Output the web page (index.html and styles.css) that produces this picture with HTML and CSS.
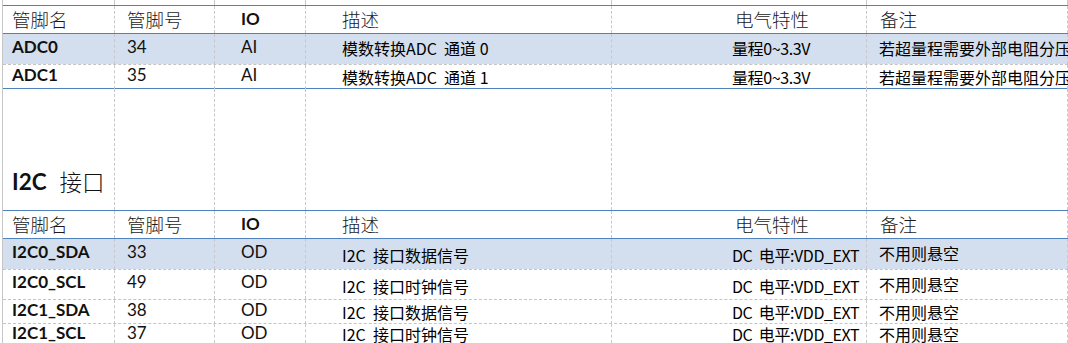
FILE: index.html
```html
<!DOCTYPE html>
<html lang="zh">
<head>
<meta charset="utf-8">
<title>管脚定义</title>
<link rel="stylesheet" href="styles.css">
</head>
<body>
<div class="sheet">
  <div class="row top blue-b">
    <div class="c c1"></div><div class="c c2"></div><div class="c c3"></div><div class="c c4"></div><div class="c c5"></div><div class="c c6"></div>
  </div>
  <div class="row head blue-b">
    <div class="c c1 hcn">管脚名</div>
    <div class="c c2 hcn">管脚号</div>
    <div class="c c3 hen">IO</div>
    <div class="c c4 hcn">描述</div>
    <div class="c c5 hcn">电气特性</div>
    <div class="c c6 hcn">备注</div>
  </div>
  <div class="row h31 hl dash-b">
    <div class="c c1 en b">ADC0</div>
    <div class="c c2 en">34</div>
    <div class="c c3 en">AI</div>
    <div class="c c4 cn">模数转换ADC  通道 0</div>
    <div class="c c5 cn">量程0~3.3V</div>
    <div class="c c6 cn">若超量程需要外部电阻分压</div>
  </div>
  <div class="row h24 blue-b">
    <div class="c c1 en b">ADC1</div>
    <div class="c c2 en">35</div>
    <div class="c c3 en">AI</div>
    <div class="c c4 cn">模数转换ADC  通道 1</div>
    <div class="c c5 cn">量程0~3.3V</div>
    <div class="c c6 cn">若超量程需要外部电阻分压</div>
  </div>
  <div class="row gap blue-b">
    <div class="c c1 title"><span class="t-en">I2C</span><span class="t-cn">接口</span></div>
    <div class="c c2"></div><div class="c c3"></div><div class="c c4"></div><div class="c c5"></div><div class="c c6"></div>
  </div>
  <div class="row head blue-b">
    <div class="c c1 hcn">管脚名</div>
    <div class="c c2 hcn">管脚号</div>
    <div class="c c3 hen">IO</div>
    <div class="c c4 hcn">描述</div>
    <div class="c c5 hcn">电气特性</div>
    <div class="c c6 hcn">备注</div>
  </div>
  <div class="row h31 hl dash-b">
    <div class="c c1 en b">I2C0_SDA</div>
    <div class="c c2 en">33</div>
    <div class="c c3 en">OD</div>
    <div class="c c4 cn low">I2C  接口数据信号</div>
    <div class="c c5 cn low">DC  电平:VDD_EXT</div>
    <div class="c c6 cn">不用则悬空</div>
  </div>
  <div class="row h30 dash-b">
    <div class="c c1 en b">I2C0_SCL</div>
    <div class="c c2 en">49</div>
    <div class="c c3 en">OD</div>
    <div class="c c4 cn low">I2C  接口时钟信号</div>
    <div class="c c5 cn low">DC  电平:VDD_EXT</div>
    <div class="c c6 cn">不用则悬空</div>
  </div>
  <div class="row h24 dash-b">
    <div class="c c1 en b">I2C1_SDA</div>
    <div class="c c2 en">38</div>
    <div class="c c3 en">OD</div>
    <div class="c c4 cn">I2C  接口数据信号</div>
    <div class="c c5 cn">DC  电平:VDD_EXT</div>
    <div class="c c6 cn">不用则悬空</div>
  </div>
  <div class="row last">
    <div class="c c1 en b">I2C1_SCL</div>
    <div class="c c2 en">37</div>
    <div class="c c3 en">OD</div>
    <div class="c c4 cn">I2C  接口时钟信号</div>
    <div class="c c5 cn">DC  电平:VDD_EXT</div>
    <div class="c c6 cn">不用则悬空</div>
  </div>
</div>
</body>
</html>
```

FILE: styles.css
```css
html, body {
  margin: 0;
  padding: 0;
  background: #ffffff;
  overflow: hidden;
}

.sheet {
  margin-left: 2px;
  width: 1065px;
  height: 343px;
  border-left: 1px solid #c6c6c6;
  overflow: hidden;
  color: #111111;
}

.row {
  display: grid;
  grid-template-columns: 112px 100px 91px 306px 255px 1fr;
  box-sizing: border-box;
  background-clip: padding-box;
}

.blue-b { border-bottom: 1px solid #4f81bd; }
.dash-b { border-bottom: 1px dashed #c4c4c4; }
.hl { background-color: #d3dfee; }

.top { height: 6px; }
.head { height: 28px; }
.h31 { height: 31px; }
.h30 { height: 30px; }
.h24 { height: 24px; }
.last { height: 19px; }
.gap { height: 122px; }

.c {
  box-sizing: border-box;
  border-right: 1px dashed #c8c8c8;
  display: flex;
  align-items: center;
  white-space: pre;
  line-height: 1.2;
  min-width: 0;
}

.last .c {
  line-height: 18px;
}

.c1 { padding-left: 9px; }
.c2 { padding-left: 12px; }
.c3 { padding-left: 26px; }
.c4 { padding-left: 36px; }
.c5 { padding-left: 120px; }
.c6 { padding-left: 12px; }

.head .c5 { padding-left: 123px; }
.head .c6 { padding-left: 13px; }

.hcn {
  font-family: "Noto Sans CJK SC", sans-serif;
  font-size: 18.5px;
  font-weight: 300;
  color: #1a1a1a;
}

.hen {
  font-family: "Lato", "Liberation Sans", sans-serif;
  font-size: 17px;
  font-weight: 700;
}

.en {
  font-family: "Lato", "Liberation Sans", sans-serif;
  font-size: 17px;
  padding-bottom: 4px;
}

.last .en { padding-bottom: 1px; }

.b { font-weight: 700; }

.cn {
  font-family: "Noto Sans CJK SC", sans-serif;
  font-size: 16px;
  color: #000000;
}

.c5.cn {
  letter-spacing: -0.4px;
}

.low { padding-top: 4px; }

.title {
  align-items: flex-end;
  padding-bottom: 15px;
}

.t-en {
  font-family: "Lato", "Liberation Sans", sans-serif;
  font-size: 22.5px;
  font-weight: 700;
}

.t-cn {
  font-family: "Noto Sans CJK SC", sans-serif;
  font-size: 22.5px;
  font-weight: 300;
  margin-left: 13px;
}
```
